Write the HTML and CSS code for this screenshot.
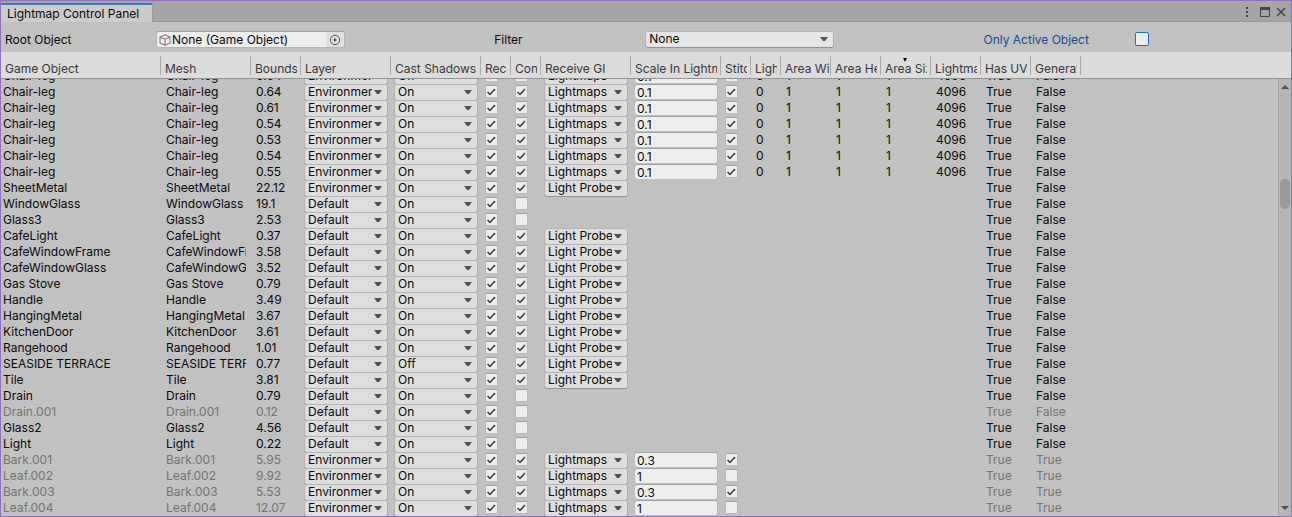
FILE: index.html
```html
<!DOCTYPE html>
<html lang="en">
<head>
<meta charset="utf-8">
<title>Lightmap Control Panel</title>
<link rel="stylesheet" href="styles.css">
</head>
<body>
<div class="window">
  <header class="titlebar">
    <h1 class="tab">Lightmap Control Panel</h1>
    <div class="window-buttons">
      <button type="button" class="icon-button" aria-label="Menu">
        <svg width="4" height="12" viewBox="0 0 4 12" fill="#454545"><path d="M1 1h2v2H1zM1 5h2v2H1zM1 9h2v2H1z"/></svg>
      </button>
      <button type="button" class="icon-button" aria-label="Maximize">
        <svg width="10" height="10" viewBox="0 0 10 10"><path d="M.5 .5h9v9h-9z" fill="none" stroke="#454545"/><path d="M0 0h10v3H0z" fill="#454545"/></svg>
      </button>
      <button type="button" class="icon-button" aria-label="Close">
        <svg width="10" height="10" viewBox="0 0 10 10"><path d="M1 1l8 8M9 1l-8 8" fill="none" stroke="#454545" stroke-width="1.5"/></svg>
      </button>
    </div>
  </header>

  <form class="toolbar">
    <div class="field">
      <label class="field-label" for="root">Root Object</label>
      <div class="object-field">
        <svg class="cube" width="12" height="12" viewBox="0 0 12 12" fill="none" stroke="#858585" stroke-width="1.2" stroke-linejoin="round"><path d="M6 .8L11 3v6L6 11.2 1 9V3zM1 3l5 2.300L11 3M6 5.300v5.900"/></svg>
        <input class="object-input" id="root" type="text" value="None (Game Object)" readonly>
        <button type="button" class="picker" aria-label="Select object">
          <svg width="12" height="12" viewBox="0 0 12 12"><circle cx="6" cy="6" r="4.700" fill="none" stroke="#555"/><circle cx="6" cy="6" r="1.400" fill="#555"/></svg>
        </button>
      </div>
    </div>
    <div class="field">
      <label class="field-label" for="filter">Filter</label>
      <select class="popup filter" id="filter"><option>None</option></select>
    </div>
    <div class="field">
      <label class="field-label focused" for="active">Only Active Object</label>
      <input class="check check-focused" id="active" type="checkbox">
    </div>
  </form>

  <main class="list">
    <div class="scroller" id="scroller">
      <table class="grid">
        <colgroup>
          <col class="w160"><col class="w90"><col class="w50"><col class="w90"><col class="w90"><col class="w30"><col class="w30"><col class="w90"><col class="w90"><col class="w30"><col class="w30"><col class="w50"><col class="w50"><col class="w50"><col class="w50"><col class="w50"><col class="w50"><col>
        </colgroup>
        <thead>
          <tr>
            <th><div class="clip">Game Object</div></th>
            <th><div class="clip">Mesh</div></th>
            <th><div class="clip">Bounds</div></th>
            <th><div class="clip">Layer</div></th>
            <th><div class="clip">Cast Shadows</div></th>
            <th><div class="clip">Receive Shadows</div></th>
            <th><div class="clip">Contribute GI</div></th>
            <th><div class="clip">Receive GI</div></th>
            <th><div class="clip">Scale In Lightmap</div></th>
            <th><div class="clip">Stitch Seams</div></th>
            <th><div class="clip">Lightmap Index</div></th>
            <th class="wide"><div class="clip">Area Width</div></th>
            <th><div class="clip">Area Height</div></th>
            <th aria-sort="descending" class="sorted"><div class="clip">Area Size</div></th>
            <th><div class="clip">Lightmap Size</div></th>
            <th><div class="clip">Has UV</div></th>
            <th><div class="clip">Generate</div></th>
            <td class="filler"></td>
          </tr>
        </thead>
        <tbody id="rows"></tbody>
      </table>
    </div>
    <div class="scrollbar">
      <button type="button" class="arrow" aria-label="Scroll up"><svg width="8" height="4" viewBox="0 0 8 4"><path d="M0 4l4-4 4 4z" fill="#4f4f4a"/></svg></button>
      <div class="track"><div class="thumb"></div></div>
      <button type="button" class="arrow" aria-label="Scroll down"><svg width="8" height="4" viewBox="0 0 8 4"><path d="M0 0h8L4 4z" fill="#4f4f4a"/></svg></button>
    </div>
  </main>
</div>
<script src="rows.js"></script>
</body>
</html>
```

FILE: styles.css
```css
* {
  box-sizing: border-box;
}

body {
  margin: 0;
  background: #c1c1c1;
  color: #090909;
  font: 12px/16px Inter, "Liberation Sans", sans-serif;
}

button,
input,
select {
  margin: 0;
  padding: 0;
  border: 0;
  border-radius: 0;
  background: none;
  color: inherit;
  font: inherit;
  appearance: none;
}

.window {
  display: flex;
  flex-direction: column;
  height: 100vh;
  border: 1px solid #9170bd;
}

.titlebar {
  display: flex;
  flex: none;
  justify-content: space-between;
  height: 21px;
  padding-top: 2px;
  border-bottom: 1px solid #999;
  background: #a5a5a5;
}

.tab {
  height: 19px;
  margin: 0;
  padding: 1px 13px 0 6px;
  border-top: 2px solid #3a78c0;
  border-right: 1px solid #999;
  border-radius: 0 2px 0 0;
  background: #cbcbcb;
  font-size: 12px;
  font-weight: 400;
}

.window-buttons {
  display: flex;
  align-items: center;
  gap: 6px;
  padding: 0 5px 1px 0;
}

.window-buttons .icon-button:first-child {
  margin-right: 5px;
}

.icon-button {
  display: flex;
}

.toolbar {
  display: grid;
  flex: none;
  grid-template-columns: 35fr 35fr 22fr;
  height: 30px;
  padding: 9px 0 4px 4px;
}

.field {
  display: flex;
  align-items: flex-start;
  min-width: 0;
}

.field-label {
  flex: 0 0 151px;
  padding-top: 1px;
}

.focused {
  color: #154a93;
}

.object-field {
  display: flex;
  align-items: center;
  width: 189px;
  height: 17px;
  overflow: hidden;
  border: 1px solid #b4b4b4;
  border-top-color: #a0a0a0;
  border-radius: 3px;
  background: #ededed;
}

.cube {
  flex: none;
  margin: 0 1px 0 2px;
}

.object-input {
  flex: 1;
  min-width: 0;
  height: 15px;
}

.picker {
  display: flex;
  align-items: center;
  justify-content: center;
  width: 18px;
  height: 15px;
  background: #dfdfdf;
}

.popup {
  display: block;
  width: 100%;
  height: 17px;
  margin-bottom: -1px;
  padding: 0 16px 1px 4px;
  border-radius: 3px;
  background: #dedede url("data:image/svg+xml,%3Csvg xmlns='http://www.w3.org/2000/svg' width='8' height='5'%3E%3Cpath d='M0 0h8L5 4H3z' fill='%2355554f'/%3E%3C/svg%3E") right 6px center no-repeat;
  box-shadow: inset 0 -1px #939393, inset 0 0 0 1px #b3b3b3;
}

.filter {
  width: 189px;
  background-color: #e6e6e6;
}

.check {
  display: block;
  width: 13px;
  height: 13px;
  margin: 1px 0 0 1px;
  border: 1px solid #b8b8b8;
  border-top-color: #a0a0a0;
  border-radius: 2px;
  background: #eee center no-repeat;
}

.check:checked {
  background-image: url("data:image/svg+xml,%3Csvg xmlns='http://www.w3.org/2000/svg' width='9' height='8'%3E%3Cpath d='M.5 4l2.500 2.500L8 1' fill='none' stroke='%23393939' stroke-width='1.500'/%3E%3C/svg%3E");
}

.check-focused {
  width: 14px;
  height: 14px;
  border-color: #1d72cf;
}

.list {
  display: grid;
  flex: 1;
  grid-template-columns: 1fr 13px;
  grid-template-rows: 27px 1fr;
  min-height: 0;
}

.scroller {
  grid-area: 1 / 1 / 3 / 3;
  overflow: hidden;
}

.grid {
  width: 100%;
  border-spacing: 0;
  table-layout: fixed;
}

.w160 {
  width: 160px;
}

.w90 {
  width: 90px;
}

.w50 {
  width: 50px;
}

.w30 {
  width: 30px;
}

.clip {
  overflow: hidden;
  white-space: nowrap;
}

.grid th,
.grid .filler {
  position: sticky;
  z-index: 1;
  top: 0;
  height: 27px;
  padding: 9px 4px 1px;
  border-bottom: 1px solid #929292;
  background: #dcdcdc;
  color: #383838;
  font-weight: 400;
  text-align: left;
}

.grid th {
  background: linear-gradient(#aaa, #aaa) right 4px / 1px 19px no-repeat #dcdcdc;
}

.grid .wide {
  padding-right: 2px;
}

.sorted::after {
  content: "";
  position: absolute;
  top: 6px;
  left: 22px;
  border: 2px solid transparent;
  border-top: 4px solid #111;
  border-bottom: 0;
}

.grid tbody td {
  height: 16px;
  padding: 0 5px;
  vertical-align: top;
}

.grid tbody td:first-child {
  padding-left: 2px;
}

.grid tbody .control {
  padding: 0 3px;
}

.inactive {
  color: #747474;
}

.inactive .control {
  color: #090909;
}

.number {
  display: block;
  width: 100%;
  height: 15px;
  padding: 1px 2px 0;
  border: 1px solid #b8b8b8;
  border-top-color: #a0a0a0;
  border-bottom: 0;
  border-radius: 3px;
  background: #eee;
  line-height: 13px;
}

.scrollbar {
  display: flex;
  grid-area: 2 / 2;
  flex-direction: column;
  border-left: 1px solid #a6a6a6;
  background: #b6b6b6;
}

.arrow {
  display: flex;
  flex: none;
  align-items: center;
  justify-content: center;
  height: 16px;
}

.track {
  flex: 1;
  padding: 84px 1px 0;
}

.thumb {
  height: 30px;
  border-radius: 5px;
  background: #999;
}
```

FILE: rows.js
```js
const ENV = "Environment";
const DEF = "Default";
const MAPS = "Lightmaps";
const PROBES = "Light Probes";

// name, bounds, layer, contributes, receive GI, extra fields
const chair = (bounds) => ["Chair-leg", bounds, ENV, true, MAPS, { scale: "0.1", stitch: true, baked: true }];

const objects = [
  ...["0.64", "0.64", "0.61", "0.54", "0.53", "0.54", "0.55"].map(chair),
  ["SheetMetal", "22.12", ENV, true, PROBES],
  ["WindowGlass", "19.1", DEF, false],
  ["Glass3", "2.53", DEF, false],
  ["CafeLight", "0.37", DEF, true, PROBES],
  ["CafeWindowFrame", "3.58", DEF, true, PROBES],
  ["CafeWindowGlass", "3.52", DEF, true, PROBES],
  ["Gas Stove", "0.79", DEF, true, PROBES],
  ["Handle", "3.49", DEF, true, PROBES],
  ["HangingMetal", "3.67", DEF, true, PROBES],
  ["KitchenDoor", "3.61", DEF, true, PROBES],
  ["Rangehood", "1.01", DEF, true, PROBES],
  ["SEASIDE TERRACE", "0.77", DEF, true, PROBES, { shadows: "Off" }],
  ["Tile", "3.81", DEF, true, PROBES],
  ["Drain", "0.79", DEF, false],
  ["Drain.001", "0.12", DEF, false, null, { inactive: true }],
  ["Glass2", "4.56", DEF, false],
  ["Light", "0.22", DEF, false],
  ["Bark.001", "5.95", ENV, true, MAPS, { scale: "0.3", stitch: true, inactive: true, generated: true }],
  ["Leaf.002", "9.92", ENV, true, MAPS, { scale: "1", stitch: false, inactive: true, generated: true }],
  ["Bark.003", "5.53", ENV, true, MAPS, { scale: "0.3", stitch: true, inactive: true, generated: true }],
  ["Leaf.004", "12.07", ENV, true, MAPS, { scale: "1", stitch: false, inactive: true, generated: true }],
];

const text = (value = "") => `<td><div class="clip">${value}</div></td>`;
const control = (html) => `<td class="control">${html}</td>`;
const popup = (label, value) =>
  value ? control(`<select class="popup" aria-label="${label}"><option>${value}</option></select>`) : text();
const check = (label, on) =>
  on === undefined ? text() : control(`<input class="check" type="checkbox" aria-label="${label}"${on ? " checked" : ""}>`);
const number = (label, value) =>
  value ? control(`<input class="number" type="text" aria-label="${label}" value="${value}">`) : text();

document.getElementById("rows").innerHTML = objects
  .map(([name, bounds, layer, contributes, gi, extra = {}]) => {
    const baked = extra.baked ? ["0", "1", "1", "1", "4096"] : ["", "", "", "", ""];
    return `<tr${extra.inactive ? ' class="inactive"' : ""}>${[
      text(name),
      text(name),
      text(bounds),
      popup(`${name} layer`, layer),
      popup(`${name} cast shadows`, extra.shadows || "On"),
      check(`${name} receive shadows`, true),
      check(`${name} contribute GI`, contributes),
      popup(`${name} receive GI`, gi),
      number(`${name} scale in lightmap`, extra.scale),
      check(`${name} stitch seams`, extra.stitch),
      ...baked.map((value) => text(value)),
      text("True"),
      text(extra.generated ? "True" : "False"),
      text(),
    ].join("")}</tr>`;
  })
  .join("");

document.getElementById("scroller").scrollTop = 11;
```
